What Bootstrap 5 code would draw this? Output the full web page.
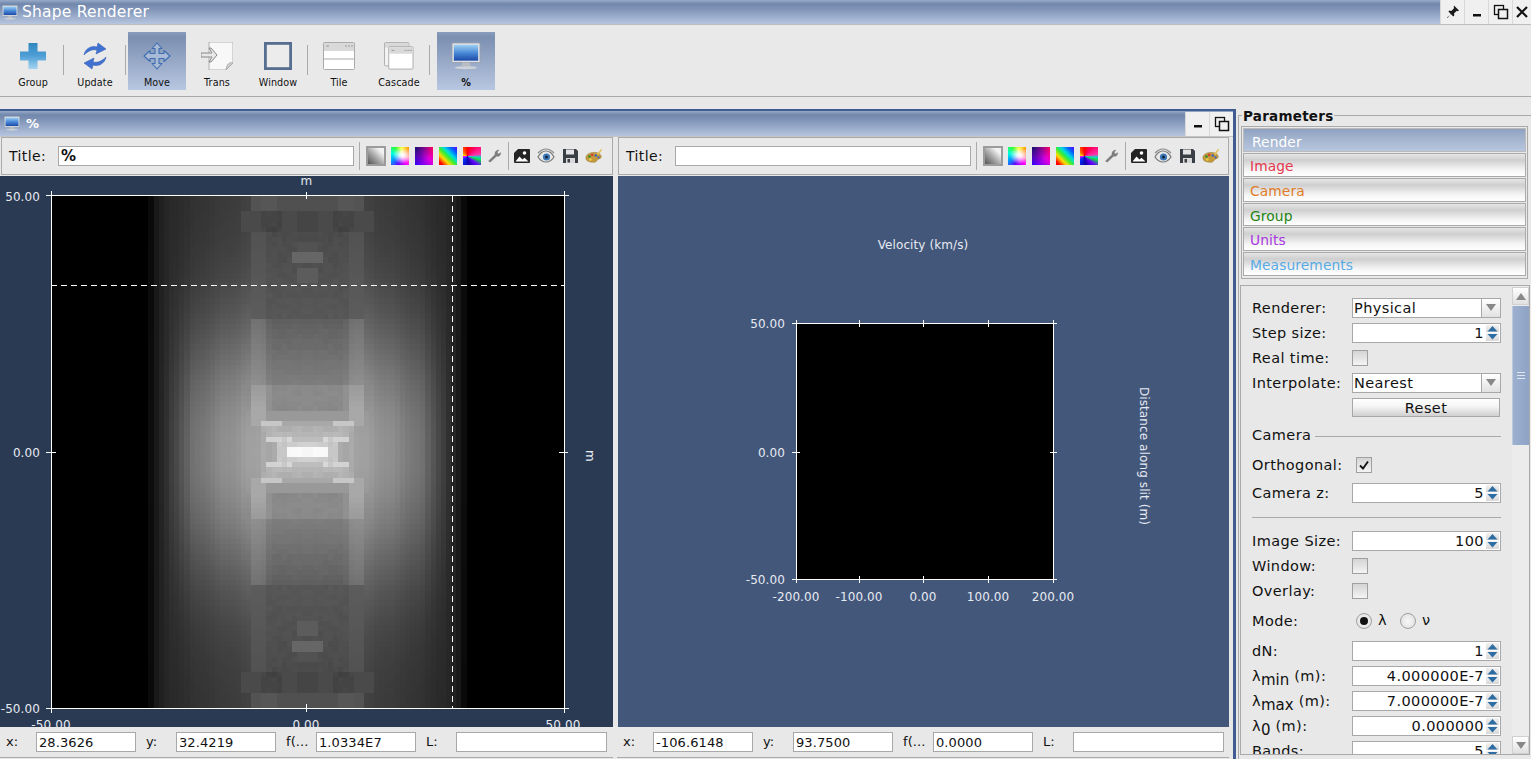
<!DOCTYPE html>
<html lang="en">
<head>
<meta charset="utf-8">
<title>Shape Renderer</title>
<link href="https://cdn.jsdelivr.net/npm/bootstrap@5.3.0/dist/css/bootstrap.min.css" rel="stylesheet">
<style>
html,body{height:759px;overflow:hidden}
body{background:#e8e8e8;font-family:"DejaVu Sans",sans-serif;font-size:13.5px;color:#111;line-height:1.2;letter-spacing:.1px}
.sprites{width:0;height:0;overflow:hidden;display:block;flex:none}
.bluebar{background:linear-gradient(#98aac8 0,#7187ab 4px,#7f94b7 9px,#b6c5df 100%)}
.appbar{height:24px;flex:none}
.leadicon{margin:0 4px 0 2px;flex:none}
.leadicon2{margin:0 6px 0 4px;flex:none}
.apptitle{font-size:15.5px;color:#fff;letter-spacing:.2px}
.winbtn{width:24px;height:24px;background:#f0f0f0;border-left:1px solid #d8d8d8;display:flex;align-items:center;justify-content:center}
.winbtn.cut{width:19px}
.toolstrip{height:73px;flex:none;border-top:1px solid #bdbdbd;border-bottom:1px solid #aaa;background:#e9e9e9;padding:7px 0 0 4px}
.toolbtn{width:58px;height:58px;font-size:9.6px;letter-spacing:.1px;color:#111}
.toolbtn svg{height:28px;width:32px;margin-top:10px;flex:none}
.toolbtn span{margin-top:7px}
.toolbtn.on{background:linear-gradient(#8a9dbc 0,#7b8fb1 5px,#b8c7e1 100%)}
.toolsep{width:1px;height:30px;background:#aaa;margin:13px 1px 0 1px}
.toolsep.far{margin-right:7px}
.toolsep.tight{margin-left:0}
.sp1{margin-left:1px}.sp2{margin-left:2px}.sp3{margin-left:3px}
.desk{width:1236px;padding-top:12px}
.intframe{height:650px;border-top:2px solid #3f5d91;border-right:3px solid #3f5d91}
.inttitle{height:26px;flex:none;border-bottom:1px solid #c4c4c4}
.inttext{font-size:13px;font-weight:700;color:#fff}
.paneA{width:613px}
.paneB{width:612px;margin-left:4px}
.pbar{height:38px;margin-left:1px;border:1px solid #aaa;background:#e9e9e9;padding-left:7px}
.ptitle{width:49px;font-size:14px;letter-spacing:.4px}
.fieldbox{background:#fff;border:1px solid #a8a8a8;border-radius:0;padding:0 2px;height:20px;font-size:14.5px;letter-spacing:.4px;line-height:18px;color:#111;box-shadow:none;min-height:0}
.fieldbox:focus{border-color:#a8a8a8;box-shadow:none}
.titlefield{width:296px;flex:none;font-weight:700;font-size:15px;letter-spacing:0}
.vsep{width:1px;height:28px;background:#aaa;flex:none}
.vs5{margin-left:5px}.vs4{margin-left:4px}
.swatch{width:18px;height:18px;flex:none}
.gap5{margin-left:5px}.gap6{margin-left:6px}.gap4{margin-left:4px}
.pressed{width:20px;height:20px;border:2px solid #9c9c9c;background:linear-gradient(to top right,#555 0,#a8a8a8 45%,#f2f2f2 80%),#ccc}
.hsv{background:radial-gradient(circle at 62% 45%,#fff 0,rgba(255,255,255,.85) 18%,rgba(255,255,255,0) 62%),conic-gradient(from 0deg at 60% 45%,#ff0 0,#f90 45deg,#f8a 110deg,#f0f 150deg,#60f 200deg,#09f 240deg,#0fd 280deg,#3f3 320deg,#ff0 360deg)}
.plasma{background:radial-gradient(circle at 0 0,#10106a 0,rgba(16,16,106,0) 70%),linear-gradient(to top right,#2a00ff 0,#e000e0 55%,#ff0050 100%)}
.spectrum{background:linear-gradient(45deg,#f00 10%,#fd0 30%,#3e3 48%,#0dd 62%,#06f 80%,#50f 100%)}
.whirl{background:conic-gradient(from 0deg at 25% 52%,#f00 0,#f06 40deg,#f3a 80deg,#0dc 95deg,#1d4 105deg,#60f 130deg,#10a 170deg,#03f 230deg,#f0f 270deg,#fd0 280deg,#f60 320deg,#f00 360deg)}
.glyph{width:18px;height:18px;flex:none}
.plotwrap{height:551px;margin-top:1px;overflow:hidden}
.plotB{margin-left:1px}
.plotwrap svg{display:block}
.softheat{filter:blur(.12px)}
.darkplot{background:#2b3a53}
.blueplot{background:#43577a}
.plotlbl{font-family:"DejaVu Sans",sans-serif;font-size:12px;fill:#e6eaf2}
.statusbar{height:31px;border-bottom:1px solid #aaa;padding-left:6px;font-size:13px}
.statlbl{width:30px;flex:none}
.statgap{margin-left:10px}
.statfield{width:100px;flex:none;font-size:13px;letter-spacing:.1px}
.statfield.wide{width:151px}
.sidewrap{width:295px;padding:11px 0 0 2px}
.paramset{border:1px solid #aaa;border-right:0;border-bottom:0;height:661px;padding:0;min-width:0}
legend.paramlegend{float:none;width:auto;font-size:13.5px;font-weight:700;letter-spacing:.25px;margin:0 0 0 3px;padding:2px 1px 0;line-height:13px;color:#111}
.tabgroup{width:287px;margin:3px 0 0 2px;border:1px solid #aaa;padding:1px;height:153px;border-radius:0;background:#e9e9e9}
.tabrow{height:24px;margin-bottom:1px;padding:3px 6px 0;border:1px solid #aaa;border-radius:0;background:linear-gradient(#e6e6e6 0,#cfcfcf 6px,#f5f5f5 16px,#fff 100%);font-size:13.8px;line-height:18px;letter-spacing:.1px}
.tabrow.on{background:linear-gradient(#8ea1c1 0,#a0b1cc 8px,#b8c6df 100%);color:#fff;padding:4px 0 0 8px;border-color:#bbb}
.t-image{color:#e5384c}.t-camera{color:#e07c28}.t-group{color:#1f8512}.t-units{color:#a838e0}.t-meas{color:#58ace6}
.scrollpanel{width:290px;height:470px;margin:6px 0 0 1px;border:1px solid #aaa}
.formcol{width:271px;height:468px;padding:9px 0 0 11px;overflow:hidden;flex:none}
.frow{height:25px}
.flabel{width:100px;flex:none;font-size:14.5px;letter-spacing:.4px;padding-top:2px}
.flabel sub{font-size:15px;bottom:-.3em;letter-spacing:0}
.ffield{width:149px;flex:none;height:20px;display:flex}
.ffield .fieldbox{width:100%;text-align:right;padding-right:2px;border-right:0}
.ffield .comboval{text-align:left;padding-left:1px}
.spinbtns{width:15px;flex:none;height:20px;border:1px solid #a8a8a8;border-left:0;background:#fff;padding:1px 1px 1px 0;display:flex;flex-direction:column;gap:1px}
.spinbtns svg{display:block;width:13px;height:8px;flex:1;background:linear-gradient(#f2f2f2,#d8d8d8)}
.combobtn{width:20px;flex:none;height:20px;border:1px solid #a8a8a8;background:linear-gradient(#fff,#e2e2e2);display:flex;align-items:center;justify-content:center}
.checkbox{width:16px;height:16px;border:1px solid #a0a0a0;background:linear-gradient(#d4d4d4,#f4f4f4);display:flex;align-items:center;justify-content:center;flex:none}
.ind4{margin-left:4px}
.resetbtn{width:148px;height:19px;padding:0;border:1px solid #a8a8a8;border-radius:0;background:linear-gradient(#fff,#f4f4f4 45%,#d0d0d0);font-size:14.5px;letter-spacing:.4px;line-height:16px;color:#111}
.sectrow{height:32px;width:249px}
.sectname{font-size:14.5px;letter-spacing:.4px}
.sectline{height:1px;background:#aaa;flex-grow:1;margin-left:4px}
.hrrow{height:23px;padding-top:12px}
.hrline{width:249px;height:1px;background:#aaa}
.gap3{margin-top:3px}
.moderow{height:35px}
.radio{width:16px;height:16px;border-radius:50%;border:1px solid #a0a0a0;background:radial-gradient(#f8f8f8,#dcdcdc);display:flex;align-items:center;justify-content:center;flex:none}
.radiodot{width:8px;height:8px;border-radius:50%;background:#111}
.radiotext{font-size:14.5px;margin-left:6px;width:22px}
.scrolltrack{width:17px;flex:none;background:#ececec;padding:1px 0 0 0}
.scrollarrow{height:18px;flex:none;background:linear-gradient(#fff,#e0e0e0);border:1px solid #d0d0d0;display:flex;align-items:center;justify-content:center}
.scrollthumb{height:139px;flex:none;margin-top:1px;background:linear-gradient(to right,#9db0cf,#8ea3c6);border-left:1px solid #bcc8dc;display:flex;align-items:center;justify-content:center}
.scrollspace{flex:1}
</style>
</head>
<body class="d-flex flex-column">

<svg class="sprites" xmlns="http://www.w3.org/2000/svg">
  <defs>
    <linearGradient id="gMon" x1="0" y1="0" x2="0" y2="1"><stop offset="0" stop-color="#9fd0f2"/><stop offset=".5" stop-color="#4a8ad8"/><stop offset="1" stop-color="#1c4aa8"/></linearGradient>
    <linearGradient id="gPlus" x1="0" y1="0" x2="0" y2="1"><stop offset="0" stop-color="#2f86bf"/><stop offset=".5" stop-color="#4f9fd6"/><stop offset="1" stop-color="#a4d4f0"/></linearGradient>
    <symbol id="monitor" viewBox="0 0 32 30">
      <rect x="1" y="1" width="30" height="21" rx="1" fill="#dfe3e8" stroke="#9aa0a8"/>
      <rect x="3" y="3" width="26" height="17" fill="url(#gMon)"/>
      <path d="M12 22h8l1 4H11z" fill="#b9bdc2"/>
      <ellipse cx="16" cy="27.5" rx="12" ry="1.6" fill="#cfd3d8"/>
    </symbol>
    <symbol id="wrench" viewBox="0 0 18 18">
      <path d="M3.500 15l-1-1 6.500-6.500c-.5-1.800.7-4.500 4-4.500l-1.800 2.200 1.400 1.800 2.200-1.600c.3 2.700-2 4.500-4.200 3.900L4.500 15z" fill="#7d7d7d" stroke="#777" stroke-width=".3"/>
    </symbol>
    <symbol id="picture" viewBox="0 0 18 18">
      <path d="M5 2h11a1 1 0 0 1 1 1v12a1 1 0 0 1-1 1H2a1 1 0 0 1-1-1V6z" fill="#242424"/>
      <circle cx="11.500" cy="6" r="1.800" fill="#fff"/>
      <path d="M2.500 14.500l4-5 3 3 2-1.800 4 3.800z" fill="#fff"/>
    </symbol>
    <symbol id="eye" viewBox="0 0 18 18">
      <path d="M1 10c2-4 5-6 8-6s6 2 8 6c-2 3-5 5-8 5s-6-2-8-5z" fill="#e8e8e8" stroke="#777" stroke-width="1.200"/>
      <path d="M1 6c3-3 5-4 8-4s5 1 8 4" fill="none" stroke="#888" stroke-width="1.100"/>
      <circle cx="9.500" cy="10" r="3.600" fill="#3d78b8"/>
      <circle cx="9.500" cy="10" r="1.500" fill="#13263f"/>
    </symbol>
    <symbol id="floppy" viewBox="0 0 18 18">
      <path d="M2 2h13l2 2v12H2z" fill="#3a3f45"/>
      <rect x="5" y="2.500" width="8" height="5" fill="#e4e4e4"/>
      <rect x="5" y="11" width="9" height="5" fill="#d8d8d8"/>
      <rect x="6.500" y="12" width="2.500" height="3.500" fill="#3a3f45"/>
    </symbol>
    <symbol id="palette" viewBox="0 0 20 18">
      <path d="M1 11c0-4 5-6 9-6 5 0 8 2 8 5 0 2-3 2-4 3s-1 3-4 3c-5 0-9-1-9-5z" fill="#c59a3c" stroke="#8a6a20" stroke-width=".5"/>
      <path d="M13 7l5-6 1 1-4 6z" fill="#e4c25a"/>
      <circle cx="5" cy="9.500" r="1.400" fill="#2c8f35"/><circle cx="8" cy="8" r="1.400" fill="#d23b2d"/><circle cx="12" cy="8.500" r="1.400" fill="#3a62c4"/><circle cx="15" cy="10.500" r="1.200" fill="#3a62c4"/><circle cx="6" cy="13" r="1.400" fill="#e8d24a"/>
    </symbol>
    <symbol id="spinup" viewBox="0 0 13 8" preserveAspectRatio="none"><path d="M6.500 1l5 6h-10z" fill="#2d6da3"/></symbol>
    <symbol id="spindn" viewBox="0 0 13 8" preserveAspectRatio="none"><path d="M6.500 7l5-6h-10z" fill="#2d6da3"/></symbol>
    <symbol id="restoreicon" viewBox="0 0 16 16"><rect x="1.500" y="1.500" width="9" height="9" fill="none" stroke="#111" stroke-width="1.300"/><rect x="5.500" y="5.500" width="9" height="9" fill="#f0f0f0" stroke="#111" stroke-width="1.500"/></symbol>
  </defs>
</svg>

<header class="appbar bluebar d-flex align-items-center">
  <svg class="leadicon" width="16" height="15" aria-hidden="true"><use href="#monitor"/></svg>
  <span class="apptitle flex-grow-1">Shape Renderer</span>
  <div class="winbtn"><svg width="16" height="16" viewBox="0 0 16 16"><path d="M9 1.500l5 5-1.300.8-.9-.5-2.800 2.800.3 2-1 1-2.500-2.600L2.500 14l-.5-.5 4-3.300L3.400 7.600l1-1 2 .3 2.800-2.800-.5-.9z" fill="#1a1a1a"/></svg></div>
  <div class="winbtn"><svg width="14" height="14" viewBox="0 0 14 14"><rect x="3" y="9" width="8" height="2.500" fill="#111"/></svg></div>
  <div class="winbtn"><svg width="16" height="16"><use href="#restoreicon"/></svg></div>
  <div class="winbtn cut"><svg width="14" height="14" viewBox="0 0 14 14"><path d="M2 2l10 10M12 2L2 12" stroke="#111" stroke-width="2.200"/></svg></div>
</header>

<nav class="toolstrip d-flex">
  <div class="toolbtn d-flex flex-column align-items-center">
    <svg viewBox="0 0 28 28"><path d="M9.500 1h9v8.500H27v9h-8.500V27h-9v-8.500H1v-9h8.500z" fill="url(#gPlus)"/></svg>
    <span>Group</span>
  </div>
  <div class="toolsep"></div>
  <div class="toolbtn sp1 d-flex flex-column align-items-center">
    <svg viewBox="0 0 28 28">
      <path d="M3 13C4 7 10 3 16 5l1-4 8 6-10 5 1-4c-5-1-9 1-13 5z" fill="#3f72d2" stroke="#2c55a8" stroke-width=".5"/>
      <path d="M25 15c-1 6-7 10-13 8l-1 4-8-6 10-5-1 4c5 1 9-1 13-5z" fill="#3f72d2" stroke="#2c55a8" stroke-width=".5"/>
    </svg>
    <span>Update</span>
  </div>
  <div class="toolsep"></div>
  <div class="toolbtn on sp1 d-flex flex-column align-items-center">
    <svg viewBox="0 0 28 28"><path d="M14 1l5 5.500h-3v5h5v-3l6 5.500-6 5.500v-3h-5v5h3L14 27l-5-5.500h3v-5H7v3L1 14l6-5.500v3h5v-5H9z" fill="#a9bad6" stroke="#3f6eb0" stroke-width="1.100" stroke-linejoin="round"/></svg>
    <span>Move</span>
  </div>
  <div class="toolbtn sp2 d-flex flex-column align-items-center">
    <svg viewBox="0 0 32 28">
      <path d="M8 0h24v21l-7 7H8z" fill="#f8f8f8" stroke="#b0b0b0"/>
      <path d="M32 21c-4-1-6 1-7 7z" fill="#d0d0d0" stroke="#aaa"/>
      <path d="M0 11h11l-3-5h2l6 7-6 7h-2l3-5H0z" fill="#e8e8e8" stroke="#888"/>
    </svg>
    <span>Trans</span>
  </div>
  <div class="toolbtn sp3 d-flex flex-column align-items-center">
    <svg viewBox="0 0 30 30"><rect x="1.500" y="1.500" width="27" height="27" fill="#ececec" stroke="#566f90" stroke-width="3"/></svg>
    <span>Window</span>
  </div>
  <div class="toolsep tight"></div>
  <div class="toolbtn sp1 d-flex flex-column align-items-center">
    <svg viewBox="0 0 32 28"><rect x=".5" y=".5" width="31" height="27" rx="1" fill="#fff" stroke="#aaa"/><rect x="1" y="1" width="30" height="8" fill="#d9d9d9"/><path d="M0 17h32" stroke="#aaa"/><path d="M3 4h3M22 4h2M25 4h2M28 4h2" stroke="#999"/></svg>
    <span>Tile</span>
  </div>
  <div class="toolbtn sp2 d-flex flex-column align-items-center">
    <svg viewBox="0 0 32 30"><rect x=".5" y=".5" width="26" height="25" rx="1" fill="#f4f4f4" stroke="#aaa"/><rect x="1" y="1" width="25" height="5" fill="#d9d9d9"/><rect x="5" y="5" width="26" height="24" rx="1" fill="#fff" stroke="#aaa"/><rect x="5.500" y="5.500" width="25" height="7" fill="#d9d9d9"/><path d="M8 9h3M22 9h2M25 9h2M28 9h2" stroke="#999"/></svg>
    <span>Cascade</span>
  </div>
  <div class="toolsep far"></div>
  <div class="toolbtn on d-flex flex-column align-items-center">
    <svg viewBox="0 0 32 30"><use href="#monitor" width="32" height="30"/></svg>
    <span class="fw-bold">%</span>
  </div>
</nav>

<main class="d-flex flex-grow-1">
  <section class="desk">
    <div class="intframe d-flex flex-column">
      <div class="inttitle bluebar d-flex align-items-center">
        <svg class="leadicon2" width="16" height="15" aria-hidden="true"><use href="#monitor"/></svg>
        <span class="inttext flex-grow-1">%</span>
        <div class="winbtn"><svg width="14" height="14" viewBox="0 0 14 14"><rect x="3" y="8" width="8" height="2.500" fill="#111"/></svg></div>
        <div class="winbtn"><svg width="16" height="16"><use href="#restoreicon"/></svg></div>
      </div>
      <div class="d-flex">

        <div class="paneA">
          <div class="pbar d-flex align-items-center">
            <span class="ptitle">Title:</span>
            <input class="form-control fieldbox titlefield" value="%">
            <span class="vsep vs5"></span>
            <span class="swatch pressed gap6"></span>
            <span class="swatch hsv gap5"></span>
            <span class="swatch plasma gap6"></span>
            <span class="swatch spectrum gap6"></span>
            <span class="swatch whirl gap6"></span>
            <svg class="glyph gap5"><use href="#wrench"/></svg>
            <span class="vsep vs4"></span>
            <svg class="glyph gap4"><use href="#picture"/></svg>
            <svg class="glyph gap6"><use href="#eye"/></svg>
            <svg class="glyph gap6"><use href="#floppy"/></svg>
            <svg class="glyph gap6"><use href="#palette"/></svg>
          </div>
          <div class="plotwrap darkplot">
            <svg width="613" height="551" viewBox="0 0 613 551" aria-label="Intensity map">
              <rect x="51" y="20" width="513" height="512" fill="#000"/>
              <svg id="heat" x="51" y="20" width="513" height="512" viewBox="0 0 100 100" preserveAspectRatio="none" shape-rendering="crispEdges"></svg>
              <g stroke="#fff" stroke-width="1" shape-rendering="crispEdges" fill="none">
                <path d="M51 19.500H564.500V532.500H51.500V19.500"/>
                <path d="M51.500 15v9M46 19.500h10M564.500 15v9M559 19.500h10M306.500 16v7M46 276.500h10M559 276.500h9M46 532.500h10M559 532.500h10M51.500 528v9M564.500 528v9M306.500 528v8"/>
                <path d="M51 109.500H564" stroke-dasharray="6 4"/>
                <path d="M452.500 20V532" stroke-dasharray="6 4"/>
              </g>
              <text class="plotlbl" x="306.500" y="9" text-anchor="middle">m</text>
              <text class="plotlbl" x="40" y="25" text-anchor="end">50.00</text>
              <text class="plotlbl" x="40" y="281" text-anchor="end">0.00</text>
              <text class="plotlbl" x="40" y="537" text-anchor="end">-50.00</text>
              <text class="plotlbl" x="51" y="553" text-anchor="middle">-50.00</text>
              <text class="plotlbl" x="306" y="553" text-anchor="middle">0.00</text>
              <text class="plotlbl" x="563" y="553" text-anchor="middle">50.00</text>
              <text class="plotlbl" text-anchor="middle" transform="translate(586 280) rotate(90)">m</text>
            </svg>
          </div>
          <div class="statusbar d-flex align-items-center">
            <span class="statlbl">x:</span><input class="form-control fieldbox statfield" value="28.3626">
            <span class="statlbl statgap">y:</span><input class="form-control fieldbox statfield" value="32.4219">
            <span class="statlbl statgap">f(...</span><input class="form-control fieldbox statfield" value="1.0334E7">
            <span class="statlbl statgap">L:</span><input class="form-control fieldbox statfield wide" value="">
          </div>
        </div>

        <div class="paneB">
          <div class="pbar d-flex align-items-center">
            <span class="ptitle">Title:</span>
            <input class="form-control fieldbox titlefield" value="">
            <span class="vsep vs5"></span>
            <span class="swatch pressed gap6"></span>
            <span class="swatch hsv gap5"></span>
            <span class="swatch plasma gap6"></span>
            <span class="swatch spectrum gap6"></span>
            <span class="swatch whirl gap6"></span>
            <svg class="glyph gap5"><use href="#wrench"/></svg>
            <span class="vsep vs4"></span>
            <svg class="glyph gap4"><use href="#picture"/></svg>
            <svg class="glyph gap6"><use href="#eye"/></svg>
            <svg class="glyph gap6"><use href="#floppy"/></svg>
            <svg class="glyph gap6"><use href="#palette"/></svg>
          </div>
          <div class="plotwrap blueplot plotB">
            <svg width="611" height="551" viewBox="0 0 611 551" aria-label="Velocity map">
              <rect x="178" y="147" width="257" height="256" fill="#000"/>
              <g stroke="#fff" stroke-width="1" shape-rendering="crispEdges" fill="none">
                <path d="M178.500 147.500H435.500V403.500H178.500V147.500"/>
                <path d="M178.500 144v7M174 147.500h8M435.500 144v7M432 147.500h7M241.500 144v7M305.500 144v7M370.500 144v7M174 276.500h8M432 276.500h7M174 403.500h8M432 403.500h7M178.500 400v7M435.500 400v7M241.500 400v7M305.500 400v7M370.500 400v7"/>
              </g>
              <text class="plotlbl" x="305" y="73" text-anchor="middle">Velocity (km/s)</text>
              <text class="plotlbl" x="167" y="152" text-anchor="end">50.00</text>
              <text class="plotlbl" x="167" y="281" text-anchor="end">0.00</text>
              <text class="plotlbl" x="167" y="408" text-anchor="end">-50.00</text>
              <text class="plotlbl" x="178" y="425" text-anchor="middle">-200.00</text>
              <text class="plotlbl" x="241" y="425" text-anchor="middle">-100.00</text>
              <text class="plotlbl" x="305" y="425" text-anchor="middle">0.00</text>
              <text class="plotlbl" x="370" y="425" text-anchor="middle">100.00</text>
              <text class="plotlbl" x="435" y="425" text-anchor="middle">200.00</text>
              <text class="plotlbl" text-anchor="middle" transform="translate(522 280) rotate(90)">Distance along slit (m)</text>
            </svg>
          </div>
          <div class="statusbar d-flex align-items-center">
            <span class="statlbl">x:</span><input class="form-control fieldbox statfield" value="-106.6148">
            <span class="statlbl statgap">y:</span><input class="form-control fieldbox statfield" value="93.7500">
            <span class="statlbl statgap">f(...</span><input class="form-control fieldbox statfield" value="0.0000">
            <span class="statlbl statgap">L:</span><input class="form-control fieldbox statfield wide" value="">
          </div>
        </div>

      </div>
    </div>
  </section>

  <aside class="sidewrap">
    <fieldset class="paramset">
      <legend class="paramlegend">Parameters</legend>
      <div class="list-group tabgroup">
        <div class="tabrow on">Render</div>
        <div class="tabrow t-image">Image</div>
        <div class="tabrow t-camera">Camera</div>
        <div class="tabrow t-group">Group</div>
        <div class="tabrow t-units">Units</div>
        <div class="tabrow t-meas">Measurements</div>
      </div>
      <div class="scrollpanel d-flex">
        <form class="formcol">
          <div class="frow d-flex align-items-center"><span class="flabel">Renderer:</span>
            <div class="ffield"><div class="fieldbox comboval flex-grow-1">Physical</div><div class="combobtn"><svg width="12" height="9" viewBox="0 0 12 9"><path d="M1 1h10L6 8z" fill="#888"/></svg></div></div></div>
          <div class="frow d-flex align-items-center"><span class="flabel">Step size:</span>
            <div class="ffield"><div class="fieldbox">1</div><div class="spinbtns"><svg><use href="#spinup"/></svg><svg><use href="#spindn"/></svg></div></div></div>
          <div class="frow d-flex align-items-center"><span class="flabel">Real time:</span><span class="checkbox"></span></div>
          <div class="frow d-flex align-items-center"><span class="flabel">Interpolate:</span>
            <div class="ffield"><div class="fieldbox comboval flex-grow-1">Nearest</div><div class="combobtn"><svg width="12" height="9" viewBox="0 0 12 9"><path d="M1 1h10L6 8z" fill="#888"/></svg></div></div></div>
          <div class="frow d-flex align-items-center"><span class="flabel"></span><button type="button" class="btn resetbtn">Reset</button></div>
          <div class="sectrow d-flex align-items-center"><span class="sectname">Camera</span><span class="sectline"></span></div>
          <div class="frow d-flex align-items-center"><span class="flabel">Orthogonal:</span><span class="checkbox ind4"><svg width="12" height="12" viewBox="0 0 12 12"><path d="M2 6.500l3 3 5-7" fill="none" stroke="#111" stroke-width="1.800"/></svg></span></div>
          <div class="frow gap3 d-flex align-items-center"><span class="flabel">Camera z:</span>
            <div class="ffield"><div class="fieldbox">5</div><div class="spinbtns"><svg><use href="#spinup"/></svg><svg><use href="#spindn"/></svg></div></div></div>
          <div class="hrrow"><div class="hrline"></div></div>
          <div class="frow d-flex align-items-center"><span class="flabel">Image Size:</span>
            <div class="ffield"><div class="fieldbox">100</div><div class="spinbtns"><svg><use href="#spinup"/></svg><svg><use href="#spindn"/></svg></div></div></div>
          <div class="frow d-flex align-items-center"><span class="flabel">Window:</span><span class="checkbox"></span></div>
          <div class="frow d-flex align-items-center"><span class="flabel">Overlay:</span><span class="checkbox"></span></div>
          <div class="moderow d-flex align-items-center"><span class="flabel">Mode:</span>
            <span class="radio ind4"><span class="radiodot"></span></span><span class="radiotext">λ</span>
            <span class="radio"></span><span class="radiotext">ν</span></div>
          <div class="frow d-flex align-items-center"><span class="flabel">dN:</span>
            <div class="ffield"><div class="fieldbox">1</div><div class="spinbtns"><svg><use href="#spinup"/></svg><svg><use href="#spindn"/></svg></div></div></div>
          <div class="frow d-flex align-items-center"><span class="flabel">λ<sub>min</sub> (m):</span>
            <div class="ffield"><div class="fieldbox">4.000000E-7</div><div class="spinbtns"><svg><use href="#spinup"/></svg><svg><use href="#spindn"/></svg></div></div></div>
          <div class="frow d-flex align-items-center"><span class="flabel">λ<sub>max</sub> (m):</span>
            <div class="ffield"><div class="fieldbox">7.000000E-7</div><div class="spinbtns"><svg><use href="#spinup"/></svg><svg><use href="#spindn"/></svg></div></div></div>
          <div class="frow d-flex align-items-center"><span class="flabel">λ<sub>0</sub> (m):</span>
            <div class="ffield"><div class="fieldbox">0.000000</div><div class="spinbtns"><svg><use href="#spinup"/></svg><svg><use href="#spindn"/></svg></div></div></div>
          <div class="frow d-flex align-items-center"><span class="flabel">Bands:</span>
            <div class="ffield"><div class="fieldbox">5</div><div class="spinbtns"><svg><use href="#spinup"/></svg><svg><use href="#spindn"/></svg></div></div></div>
        </form>
        <div class="scrolltrack d-flex flex-column">
          <div class="scrollarrow"><svg width="12" height="9" viewBox="0 0 12 9"><path d="M1 8h10L6 1z" fill="#888"/></svg></div>
          <div class="scrollthumb"><svg width="8" height="7" viewBox="0 0 8 7"><path d="M0 .5h8M0 3.500h8M0 6.500h8" stroke="#dfe6f0"/></svg></div>
          <div class="scrollspace"></div>
          <div class="scrollarrow"><svg width="12" height="9" viewBox="0 0 12 9"><path d="M1 1h10L6 8z" fill="#888"/></svg></div>
        </div>
      </div>
    </fieldset>
  </aside>
</main>

<script src="https://cdn.jsdelivr.net/npm/bootstrap@5.3.0/dist/js/bootstrap.bundle.min.js"></script>
<script>
(function(){
  function hash(a,b){var s=Math.sin(a*12.9898+b*78.233)*43758.5453;return s-Math.floor(s);}
  function lerp(pts,u){
    for(var i=1;i<pts.length;i++){
      if(u<=pts[i][0]){var t=(u-pts[i-1][0])/(pts[i][0]-pts[i-1][0]);return pts[i-1][1]+t*(pts[i][1]-pts[i-1][1]);}
    }
    return 0;
  }
  var topEdge=[[0,.26],[10,.25],[20,.2],[27,.15],[29,.1],[30,.04],[31,0],[100,0]];
  var midEdge=[[0,.68],[8,.66],[16,.56],[22,.44],[26,.24],[28.500,.12],[30,.05],[31,0],[100,0]];
  function value(u,v){
    var w=Math.exp(-(v*v)/(25*25));
    var t=lerp(topEdge,u),m=lerp(midEdge,u);
    var b=(t+(m-t)*w)*(1+.04*(hash(u,3)-.5));
    if(b<=0) return 0;
    var s=null;
    if(v<1){ if(u<4) s=.96+.03*hash(u,1); else if(u<5.500) s=.78; }
    else if(v<2){ if(u<6) s=.82-.06*hash(u,2); }
    else if(v<3){ if(u<3) s=.74; else if(u<7.500) s=.88-.1*hash(u,2); }
    else if(v<4){ if(u<8) s=.7+.03*hash(u,v); }
    else if(v<5){ if(u<9) s=.68+.03*hash(u,v); }
    else if(v<6){ if(u<9) s=(u>4&&hash(u,9)>.3)?.78:.66; else if(u<10.500) s=.66; }
    else if(v<8){ if(u<8) s=.6; else if(u<10.500) s=.66; }
    else if(v<13){ if(u<7) s=.53+.02*hash(u,v); else if(u<8) s=.57; else if(u<10.500) s=.66-.012*(v-8); else if(u<12.500) s=.58-.01*(v-8); }
    else if(v<26){ var k=(v-13)/13; if(u<7) s=.48-.12*k+.015*hash(u,v); else if(u<8) s=.5-.12*k; else if(u<10.500) s=.55-.12*k+.015*hash(u,4); else if(u<11) s=.5-.1*k; }
    else if(v<43){
      var k2=(v-26)/17;
      if(u<2&&v>=33&&v<36) s=.36;
      else if(u<3&&v>=37&&v<38.500) s=.4;
      else if(u<2&&v>=38.500&&v<41) s=.32;
      else if(u<8) s=.33-.05*k2+.02*hash(u,v);
      else if(u<10.500) s=.36-.04*k2;
    }
    else if(v<47){ if(u<2) s=.27; else if(u>=5&&u<9) s=.25+.03*hash(u,v); else if(u<12.500) s=.29; }
    else { if(u<10.500) s=.31+.03*hash(Math.floor(u/3),7); }
    return s===null? b : s;
  }
  var heat=document.getElementById('heat'),out='';
  for(var y=0;y<100;y++){
    var v=Math.abs(y-49.5)-.5, run=0, last=-1;
    for(var x=0;x<=100;x++){
      var g=-1;
      if(x<100){ g=Math.round(255*Math.min(1,value(Math.abs(x-49.5)-.5,v))); }
      if(g!==last){
        if(last>0) out+='<rect x="'+run+'" y="'+y+'" width="'+(x-run)+'" height="1" fill="rgb('+last+','+last+','+last+')"/>';
        run=x; last=g;
      }
    }
  }
  heat.innerHTML='<g class="softheat">'+out+'</g>';
})();
</script>
</body>
</html>
